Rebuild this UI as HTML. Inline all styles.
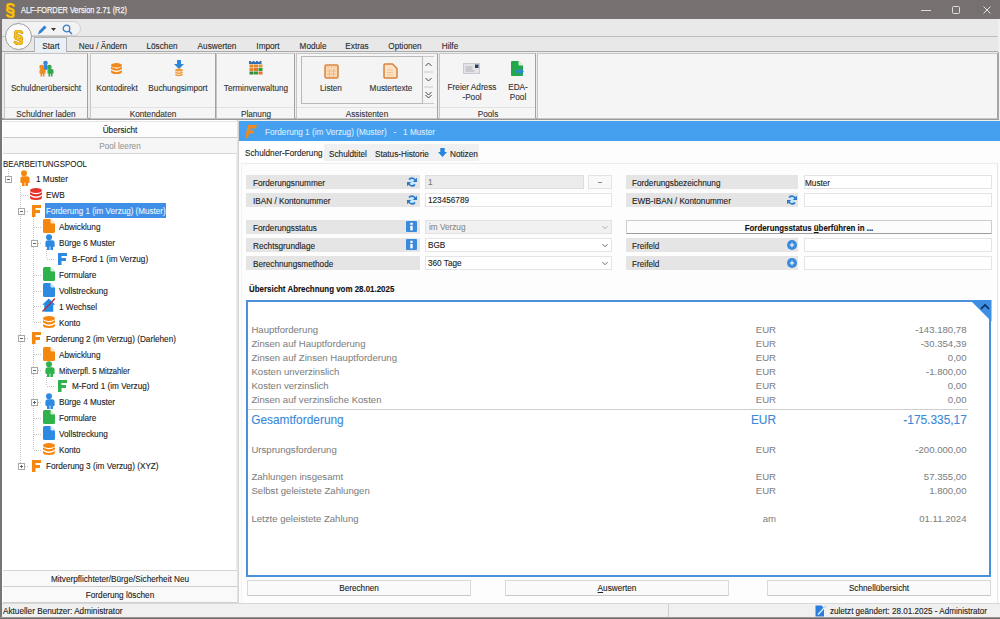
<!DOCTYPE html><html><head><meta charset="utf-8"><style>
*{margin:0;padding:0;box-sizing:border-box}
html,body{width:1000px;height:619px;overflow:hidden}
body{position:relative;background:#f0f0f0;font-family:"Liberation Sans",sans-serif;font-size:8.2px;color:#222}
.a{position:absolute}
.t{position:absolute;white-space:nowrap;line-height:1;-webkit-text-stroke:0.12px currentColor}
</style></head><body>
<svg width="0" height="0" style="position:absolute">
<defs>
<symbol id="person" viewBox="0 0 12 16"><circle cx="6" cy="3.2" r="3"/><path d="M3 6.3h6q2.6 0 2.6 2.6v3.4q0 .8-.8 .8h-.8v-3.5v6.6q0 .6-.6 .6h-1.4q-.6 0-.6-.6v-3.8h-.8v3.8q0 .6-.6 .6h-1.4q-.6 0-.6-.6v-6.6v3.5h-.8q-.8 0-.8-.8v-3.4q0-2.6 2.6-2.6z"/></symbol>
<symbol id="db" viewBox="0 0 12 12"><ellipse cx="6" cy="2.5" rx="6" ry="2.5"/><path d="M0 4.2q6 4 12 0v2.3q-6 4-12 0z"/><path d="M0 8q6 4 12 0v1.5q0 2.5-6 2.5t-6-2.5z"/></symbol>
<symbol id="F" viewBox="0 0 9 12"><path d="M0 0h9v3h-5.5v2h4.5v3h-4.5v4h-3.5z"/></symbol>
<symbol id="doc" viewBox="0 0 12 14"><path d="M1.5 0h6l4.5 4.5v8q0 1.5-1.5 1.5h-9q-1.5 0-1.5-1.5v-11q0-1.5 1.5-1.5z"/><path d="M7.5 0v3q0 1.5 1.5 1.5h3" fill="#fff" opacity=".8"/></symbol>
<symbol id="house" viewBox="0 0 13.5 14"><path d="M6.75 0.5l6.5 6.2h-2v7h-9v-7h-2z" fill="#1e8ae6"/><path d="M0.5 13.5L13 0.5" stroke="#b03040" stroke-width="1.4"/></symbol>
<symbol id="refresh" viewBox="0 0 10 10"><circle cx="5" cy="5" r="3.6" fill="#c6e6fb"/><path d="M8.6 4.2A3.7 3.7 0 0 0 2 2.6" fill="none" stroke="#2c78c8" stroke-width="1.7"/><path d="M10 0.8v4.2h-4.2z" fill="#2c78c8"/><path d="M1.4 5.8A3.7 3.7 0 0 0 8 7.4" fill="none" stroke="#2c78c8" stroke-width="1.7"/><path d="M0 9.2v-4.2h4.2z" fill="#2c78c8"/></symbol>
<symbol id="info" viewBox="0 0 11 11"><rect width="11" height="11" rx="1" fill="#3a8bdc"/><rect x="4.3" y="1.8" width="2.4" height="2" fill="#fff"/><rect x="4.3" y="4.8" width="2.4" height="4.6" fill="#fff"/></symbol>
<symbol id="plus" viewBox="0 0 10 10"><circle cx="5" cy="5" r="5" fill="#3a8bdc"/><path d="M5 2.8v4.4M2.8 5h4.4" stroke="#fff" stroke-width="1.1"/></symbol>
<symbol id="chev" viewBox="0 0 8 5"><path d="M1.5 1.2l2.5 2.5l2.5-2.5" fill="none" stroke="#666" stroke-width="1"/></symbol>
<symbol id="exp" viewBox="0 0 7 7"><rect x=".5" y=".5" width="6" height="6" fill="#fff" stroke="#a8a8a8"/><path d="M2 3.5h3" stroke="#666"/></symbol>
<symbol id="expp" viewBox="0 0 7 7"><rect x=".5" y=".5" width="6" height="6" fill="#fff" stroke="#a8a8a8"/><path d="M2 3.5h3M3.5 2v3" stroke="#666"/></symbol>
</defs></svg>
<div class="a" style="left:0px;top:0px;width:1000px;height:19px;background:#767070"></div>
<div class="t" style="left:21px;top:5.44px;font-size:9.4px;color:#f4f4f4;transform:scaleX(0.782);transform-origin:left;-webkit-text-stroke:0.25px #f4f4f4">ALF-FORDER Version 2.71 (R2)</div>
<svg class="a" style="left:5px;top:2.5px" width="11" height="15" viewBox="0 0 10.5 14.5"><path d="M8.5 2.6Q7.2 1 5.2 1Q2.2 1 2.2 3.1Q2.2 4.6 4.3 5.3L6.5 6Q8.4 6.7 8.4 8.2Q8.4 9.6 6.6 10M3.8 4.6Q2 5.2 2 6.6Q2 8 4 8.7L6.3 9.5Q8.3 10.2 8.3 11.5Q8.3 13.4 5.3 13.4Q3.2 13.4 2 11.8" fill="none" stroke="#c98a10" stroke-width="2.8" stroke-linecap="round"/><path d="M8.5 2.6Q7.2 1 5.2 1Q2.2 1 2.2 3.1Q2.2 4.6 4.3 5.3L6.5 6Q8.4 6.7 8.4 8.2Q8.4 9.6 6.6 10M3.8 4.6Q2 5.2 2 6.6Q2 8 4 8.7L6.3 9.5Q8.3 10.2 8.3 11.5Q8.3 13.4 5.3 13.4Q3.2 13.4 2 11.8" fill="none" stroke="#f6c21c" stroke-width="1.9" stroke-linecap="round"/></svg>
<div class="a" style="left:921px;top:10px;width:10px;height:1px;background:#dcdcdc"></div>
<div class="a" style="left:952px;top:6px;width:8px;height:8px;border:1px solid #dcdcdc;border-radius:1.5px"></div>
<svg class="a" style="left:982px;top:5px" width="10" height="10"><path d="M1.5 1.5L8.5 8.5M8.5 1.5L1.5 8.5" stroke="#e0e0e0" stroke-width="1"/></svg>
<div class="a" style="left:0px;top:19px;width:2px;height:600px;background:#7a7575"></div>
<div class="a" style="left:0px;top:617px;width:1000px;height:1px;background:#9a9696"></div>
<div class="a" style="left:0px;top:618px;width:1000px;height:1px;background:#6e6a6a"></div>
<div class="a" style="left:2px;top:19px;width:996px;height:18px;background:#e9e9e9;border-bottom:1px solid #bdbdbd"></div>
<div class="a" style="left:14px;top:21px;width:67px;height:15px;background:#f3f3f3;border:1px solid #cfcfcf;border-radius:8px"></div>
<svg class="a" style="left:37px;top:24px" width="11" height="11" viewBox="0 0 11 11"><path d="M1.5 9.5L2 7L7.5 1.5L9.5 3.5L4 9z" fill="#2f7fd0"/><path d="M1 10l1.5-0.5" stroke="#2f7fd0"/></svg>
<svg class="a" style="left:51px;top:28px" width="5" height="3"><path d="M0 0h5l-2.5 3z" fill="#333"/></svg>
<svg class="a" style="left:62px;top:24px" width="11" height="11" viewBox="0 0 11 11"><circle cx="4.5" cy="4.5" r="3.3" fill="none" stroke="#3b7fc6" stroke-width="1.3"/><path d="M7 7l3 3" stroke="#3b7fc6" stroke-width="1.5"/></svg>
<div class="a" style="left:2px;top:37px;width:996px;height:15px;background:#e8e8e8;border-bottom:1px solid #a9a9a9"></div>
<div class="a" style="left:34px;top:37px;width:33px;height:16px;background:#e8f0f8;border:1px solid #b3b3b3;border-bottom:none"></div>
<div class="t" style="left:-249px;width:600px;text-align:center;top:40.87px;font-size:9.6px;color:#2a2a2a;transform:scaleX(0.855);transform-origin:center;">Start</div>
<div class="t" style="left:-197px;width:600px;text-align:center;top:40.87px;font-size:9.6px;color:#2a2a2a;transform:scaleX(0.855);transform-origin:center;">Neu / Ändern</div>
<div class="t" style="left:-138px;width:600px;text-align:center;top:40.87px;font-size:9.6px;color:#2a2a2a;transform:scaleX(0.855);transform-origin:center;">Löschen</div>
<div class="t" style="left:-83px;width:600px;text-align:center;top:40.87px;font-size:9.6px;color:#2a2a2a;transform:scaleX(0.855);transform-origin:center;">Auswerten</div>
<div class="t" style="left:-31.69999999999999px;width:600px;text-align:center;top:40.87px;font-size:9.6px;color:#2a2a2a;transform:scaleX(0.855);transform-origin:center;">Import</div>
<div class="t" style="left:13px;width:600px;text-align:center;top:40.87px;font-size:9.6px;color:#2a2a2a;transform:scaleX(0.855);transform-origin:center;">Module</div>
<div class="t" style="left:57.39999999999998px;width:600px;text-align:center;top:40.87px;font-size:9.6px;color:#2a2a2a;transform:scaleX(0.855);transform-origin:center;">Extras</div>
<div class="t" style="left:105px;width:600px;text-align:center;top:40.87px;font-size:9.6px;color:#2a2a2a;transform:scaleX(0.855);transform-origin:center;">Optionen</div>
<div class="t" style="left:149.7px;width:600px;text-align:center;top:40.87px;font-size:9.6px;color:#2a2a2a;transform:scaleX(0.855);transform-origin:center;">Hilfe</div>
<div class="a" style="left:5px;top:23px;width:27px;height:27px;background:#fbfbfb;border:1px solid #9c9c9c;border-radius:50%"></div>
<svg class="a" style="left:12.5px;top:29.5px" width="11" height="15" viewBox="0 0 10.5 14.5"><path d="M8.5 2.6Q7.2 1 5.2 1Q2.2 1 2.2 3.1Q2.2 4.6 4.3 5.3L6.5 6Q8.4 6.7 8.4 8.2Q8.4 9.6 6.6 10M3.8 4.6Q2 5.2 2 6.6Q2 8 4 8.7L6.3 9.5Q8.3 10.2 8.3 11.5Q8.3 13.4 5.3 13.4Q3.2 13.4 2 11.8" fill="none" stroke="#c98a10" stroke-width="2.8" stroke-linecap="round"/><path d="M8.5 2.6Q7.2 1 5.2 1Q2.2 1 2.2 3.1Q2.2 4.6 4.3 5.3L6.5 6Q8.4 6.7 8.4 8.2Q8.4 9.6 6.6 10M3.8 4.6Q2 5.2 2 6.6Q2 8 4 8.7L6.3 9.5Q8.3 10.2 8.3 11.5Q8.3 13.4 5.3 13.4Q3.2 13.4 2 11.8" fill="none" stroke="#f6c21c" stroke-width="1.9" stroke-linecap="round"/></svg>
<div class="a" style="left:2px;top:52px;width:997px;height:68px;background:#ececec;border-right:1px solid #a9a9a9;border-bottom:2px solid #9a9a9a"></div>
<div class="a" style="left:4px;top:53px;width:84px;height:66px;background:#f5f5f5;border:1px solid #c6c6c6;border-right-color:#a2a2a2"></div>
<div class="a" style="left:5px;top:107px;width:82px;height:1px;background:#e2e2e2"></div>
<div class="t" style="left:-254.0px;width:600px;text-align:center;top:108.67px;font-size:9.6px;color:#333;transform:scaleX(0.855);transform-origin:center;">Schuldner laden</div>
<div class="a" style="left:90px;top:53px;width:126px;height:66px;background:#f5f5f5;border:1px solid #c6c6c6;border-right-color:#a2a2a2"></div>
<div class="a" style="left:91px;top:107px;width:124px;height:1px;background:#e2e2e2"></div>
<div class="t" style="left:-147.0px;width:600px;text-align:center;top:108.67px;font-size:9.6px;color:#333;transform:scaleX(0.855);transform-origin:center;">Kontendaten</div>
<div class="a" style="left:216px;top:53px;width:79px;height:66px;background:#f5f5f5;border:1px solid #c6c6c6;border-right-color:#a2a2a2"></div>
<div class="a" style="left:217px;top:107px;width:77px;height:1px;background:#e2e2e2"></div>
<div class="t" style="left:-44.5px;width:600px;text-align:center;top:108.67px;font-size:9.6px;color:#333;transform:scaleX(0.855);transform-origin:center;">Planung</div>
<div class="a" style="left:296px;top:53px;width:142px;height:66px;background:#f5f5f5;border:1px solid #c6c6c6;border-right-color:#a2a2a2"></div>
<div class="a" style="left:297px;top:107px;width:140px;height:1px;background:#e2e2e2"></div>
<div class="t" style="left:67.0px;width:600px;text-align:center;top:108.67px;font-size:9.6px;color:#333;transform:scaleX(0.855);transform-origin:center;">Assistenten</div>
<div class="a" style="left:439px;top:53px;width:97px;height:66px;background:#f5f5f5;border:1px solid #c6c6c6;border-right-color:#a2a2a2"></div>
<div class="a" style="left:440px;top:107px;width:95px;height:1px;background:#e2e2e2"></div>
<div class="t" style="left:187.5px;width:600px;text-align:center;top:108.67px;font-size:9.6px;color:#333;transform:scaleX(0.855);transform-origin:center;">Pools</div>
<div class="a" style="left:537px;top:53px;width:461px;height:66px;background:#f5f5f5;border:1px solid #c6c6c6;border-right-color:#a2a2a2"></div>
<div class="t" style="left:-253.7px;width:600px;text-align:center;top:82.87px;font-size:9.6px;color:#333;transform:scaleX(0.855);transform-origin:center;">Schuldnerübersicht</div>
<div class="t" style="left:-183.2px;width:600px;text-align:center;top:82.87px;font-size:9.6px;color:#333;transform:scaleX(0.855);transform-origin:center;">Kontodirekt</div>
<div class="t" style="left:-121.80000000000001px;width:600px;text-align:center;top:82.87px;font-size:9.6px;color:#333;transform:scaleX(0.855);transform-origin:center;">Buchungsimport</div>
<div class="t" style="left:-44px;width:600px;text-align:center;top:82.87px;font-size:9.6px;color:#333;transform:scaleX(0.855);transform-origin:center;">Terminverwaltung</div>
<div class="a" style="left:301px;top:56px;width:122px;height:48px;background:#f4f4f4;border:1px solid #b9b9b9"></div>
<div class="a" style="left:423px;top:56px;width:11px;height:48px;background:#f4f4f4;border-top:1px solid #c9c9c9;border-bottom:1px solid #c9c9c9"></div>
<div class="t" style="left:31px;width:600px;text-align:center;top:83.37px;font-size:9.6px;color:#333;transform:scaleX(0.855);transform-origin:center;">Listen</div>
<div class="t" style="left:90.5px;width:600px;text-align:center;top:83.37px;font-size:9.6px;color:#333;transform:scaleX(0.855);transform-origin:center;">Mustertexte</div>
<div class="t" style="left:172px;width:600px;text-align:center;top:82.37px;font-size:9.6px;color:#333;transform:scaleX(0.855);transform-origin:center;">Freier Adress</div>
<div class="t" style="left:172px;width:600px;text-align:center;top:92.37px;font-size:9.6px;color:#333;transform:scaleX(0.855);transform-origin:center;">-Pool</div>
<div class="t" style="left:218px;width:600px;text-align:center;top:82.37px;font-size:9.6px;color:#333;transform:scaleX(0.855);transform-origin:center;">EDA-</div>
<div class="t" style="left:218px;width:600px;text-align:center;top:92.37px;font-size:9.6px;color:#333;transform:scaleX(0.855);transform-origin:center;">Pool</div>
<svg class="a" style="left:423px;top:58px" width="11" height="45" viewBox="0 0 11 45"><path d="M2.5 8l3-3l3 3" fill="none" stroke="#444" stroke-width="1"/><path d="M1 14h9M1 29h9" stroke="#c8c8c8"/><path d="M2.5 20l3 3l3-3" fill="none" stroke="#444" stroke-width="1"/><path d="M2.5 34l3 3l3-3M2.5 37l3 3l3-3" fill="none" stroke="#444" stroke-width="1"/></svg>
<svg class="a" style="left:37px;top:60px" width="17" height="17" viewBox="0 0 17 17"><g fill="#3a86d8"><circle cx="8.5" cy="3" r="2.3"/><rect x="6.3" y="5" width="4.4" height="5" rx="1"/></g><g fill="#f28a1e"><circle cx="4.5" cy="7" r="2.2"/><path d="M2 9h5q1.5 0 1.5 1.5v3h-1v3h-1.6v-2.5h-0.8v2.5h-1.6v-3h-1v-3q0-1.5 1.5-1.5z"/></g><g fill="#2ea84a"><circle cx="12.5" cy="7" r="2.2"/><path d="M10 9h5q1.5 0 1.5 1.5v3h-1v3h-1.6v-2.5h-0.8v2.5h-1.6v-3h-1v-3q0-1.5 1.5-1.5z"/></g></svg>
<svg class="a" style="left:110.5px;top:63px;fill:#f08a1e" width="11" height="11"><use href="#db"/></svg>
<svg class="a" style="left:174px;top:60px" width="10" height="17" viewBox="0 0 10 17"><path d="M3 0h4v4h3l-5 5l-5-5h3z" fill="#2b86dc"/><g fill="#f29a3c"><ellipse cx="5" cy="10" rx="3.8" ry="1.5"/><path d="M1.2 11.2q3.8 2.5 7.6 0v1.5q-3.8 2.5-7.6 0z"/><path d="M1.2 13.6q3.8 2.5 7.6 0v1q0 1.6-3.8 1.6t-3.8-1.6z"/></g></svg>
<svg class="a" style="left:249px;top:61px" width="14" height="14" viewBox="0 0 14 14"><path d="M0 0h2v1h1.5v-1h2v1h1.5v-1h2v1h1.5v-1h2v3h-14z" fill="#2f6fb8"/><rect x="0.5" y="3.5" width="4" height="3" fill="#e8862a"/><rect x="5" y="3.5" width="4" height="3" fill="#e8862a"/><rect x="9.5" y="3.5" width="4" height="3" fill="#d99a3a"/><rect x="0.5" y="7" width="4" height="3" fill="#e8862a"/><rect x="5" y="7" width="4" height="3" fill="#e0782a"/><rect x="9.5" y="7" width="4" height="3" fill="#2f9a3e"/><rect x="0.5" y="10.5" width="4" height="3" fill="#2f8a3a"/><rect x="5" y="10.5" width="4" height="3" fill="#3a9a3a"/><rect x="9.5" y="10.5" width="4" height="3" fill="#e0782a"/></svg>
<svg class="a" style="left:324px;top:64px" width="15" height="15" viewBox="0 0 15 15"><rect x="1" y="1" width="13" height="13" rx="1.5" fill="#fbd9b4" stroke="#d9833a" stroke-width="1.5"/><path d="M4 1v3M7.5 1v3M11 1v3M3 7h9M3 10h9M5.5 5v8M9.5 5v8" stroke="#eab586" stroke-width=".8"/></svg>
<svg class="a" style="left:383px;top:63px" width="15" height="16" viewBox="0 0 15 16"><path d="M2 1h7.5l4.5 4.5v8.5q0 1-1 1h-11q-1 0-1-1v-12q0-1 1-1z" fill="#fde3c5" stroke="#d9833a" stroke-width="1.5"/><path d="M4 7h6M4 9.5h6M4 12h6" stroke="#eab586" stroke-width=".7"/></svg>
<svg class="a" style="left:463px;top:63px" width="17" height="11" viewBox="0 0 17 11"><rect x=".5" y=".5" width="16" height="10" fill="#e4e4e8" stroke="#c9c9cf"/><path d="M2.5 4h7M2.5 6h7M2.5 8h9" stroke="#a9a9b2" stroke-width=".9"/><rect x="12" y="1.5" width="3.5" height="3.5" fill="#2a3f5a"/></svg>
<svg class="a" style="left:511px;top:61px" width="14" height="15" viewBox="0 0 14 15"><path d="M1 0h6.5l4.5 4.5v9.5q0 1-1 1h-10q-1 0-1-1v-13q0-1 1-1z" fill="#22a84a"/><path d="M7.5 0v3.5q0 1 1 1h3.5" fill="#d8f5de"/><path d="M5 9.5h4v-2l4 3l-4 3v-2h-4z" fill="#2e86e0"/></svg>
<div class="a" style="left:2px;top:120px;width:236px;height:483px;background:#fff"></div>
<div class="a" style="left:236px;top:120px;width:1px;height:483px;background:#eeeeee"></div>
<div class="a" style="left:237px;top:120px;width:1px;height:483px;background:#e2e2e2"></div>
<div class="a" style="left:238px;top:120px;width:1px;height:483px;background:#d4d4d4"></div>
<div class="a" style="left:3px;top:121px;width:234px;height:17px;background:#fdfdfd;border-top:1px solid #e6e6e6;border-bottom:1px solid #c9c9c9"></div>
<div class="t" style="left:-180px;width:600px;text-align:center;top:124.97px;font-size:9.6px;color:#222;transform:scaleX(0.855);transform-origin:center;">Übersicht</div>
<div class="a" style="left:3px;top:138px;width:234px;height:16px;background:#f6f6f6;border-bottom:1px solid #d6d6d6"></div>
<div class="t" style="left:-180px;width:600px;text-align:center;top:140.87px;font-size:9.6px;color:#9a9a9a;transform:scaleX(0.855);transform-origin:center;">Pool leeren</div>
<div class="t" style="left:2.5px;top:158.87px;font-size:9.6px;color:#222;transform:scaleX(0.825);transform-origin:left;-webkit-text-stroke:0.1px #222">BEARBEITUNGSPOOL</div>
<div class="a" style="left:239px;top:121px;width:761px;height:20px;background:#45a0f0"></div>
<svg class="a" style="left:246px;top:125px" width="11" height="13" viewBox="0 0 11 13"><path d="M2 0h9l-1 3.5h-5.5l-0.5 2h4.5l-1 3h-4.5l-1 4.5h-3z" fill="#f08a1e"/></svg>
<div class="t" style="left:264.5px;top:126.97px;font-size:9.6px;color:#dcebfb;transform:scaleX(0.855);transform-origin:left;">Forderung 1 (im Verzug) (Muster)&nbsp;&nbsp;&nbsp;-&nbsp;&nbsp;&nbsp;1 Muster</div>
<div class="a" style="left:20px;top:186.0px;width:1px;height:279.74px;background:repeating-linear-gradient(to bottom,#c4c4c4 0 1px,transparent 1px 2px)"></div>
<div class="a" style="left:8px;top:169.0px;width:1px;height:7.0px;background:repeating-linear-gradient(to bottom,#c4c4c4 0 1px,transparent 1px 2px)"></div>
<div class="a" style="left:33px;top:216.86px;width:1px;height:105.50999999999999px;background:repeating-linear-gradient(to bottom,#c4c4c4 0 1px,transparent 1px 2px)"></div>
<div class="a" style="left:33px;top:344.3px;width:1px;height:105.50999999999999px;background:repeating-linear-gradient(to bottom,#c4c4c4 0 1px,transparent 1px 2px)"></div>
<div class="a" style="left:46px;top:248.72px;width:1px;height:9.929999999999978px;background:repeating-linear-gradient(to bottom,#c4c4c4 0 1px,transparent 1px 2px)"></div>
<div class="a" style="left:46px;top:376.15999999999997px;width:1px;height:9.930000000000064px;background:repeating-linear-gradient(to bottom,#c4c4c4 0 1px,transparent 1px 2px)"></div>
<svg class="a" style="left:5px;top:176.0px;" width="7" height="7"><use href="#exp"/></svg>
<svg class="a" style="left:17.5px;top:170.0px;fill:#f5870f" width="12" height="16"><use href="#person"/></svg>
<div class="t" style="left:36px;top:174.37px;font-size:9.6px;color:#222;transform:scaleX(0.855);transform-origin:left;">1 Muster</div>
<div class="a" style="left:21px;top:194.93px;width:8px;height:1px;background:repeating-linear-gradient(to right,#c4c4c4 0 1px,transparent 1px 2px)"></div>
<svg class="a" style="left:30px;top:188.43px;fill:#e5322b" width="12" height="12"><use href="#db"/></svg>
<div class="t" style="left:46px;top:190.30px;font-size:9.6px;color:#222;transform:scaleX(0.855);transform-origin:left;">EWB</div>
<div class="a" style="left:21px;top:210.86px;width:8px;height:1px;background:repeating-linear-gradient(to right,#c4c4c4 0 1px,transparent 1px 2px)"></div>
<svg class="a" style="left:18px;top:207.86px;" width="7" height="7"><use href="#exp"/></svg>
<svg class="a" style="left:31.5px;top:204.86px;fill:#f5870f" width="9" height="12"><use href="#F"/></svg>
<div class="a" style="left:45px;top:202.86px;width:121px;height:15px;background:#3f8fe8"></div>
<div class="t" style="left:46px;top:206.23px;font-size:9.6px;color:#e4f4ff;transform:scaleX(0.84);transform-origin:left;">Forderung 1 (im Verzug) (Muster)</div>
<div class="a" style="left:34px;top:226.79px;width:8px;height:1px;background:repeating-linear-gradient(to right,#c4c4c4 0 1px,transparent 1px 2px)"></div>
<svg class="a" style="left:42.5px;top:219.29px;fill:#f5870f" width="12" height="14"><use href="#doc"/></svg>
<div class="t" style="left:59px;top:222.16px;font-size:9.6px;color:#222;transform:scaleX(0.855);transform-origin:left;">Abwicklung</div>
<div class="a" style="left:34px;top:242.72px;width:8px;height:1px;background:repeating-linear-gradient(to right,#c4c4c4 0 1px,transparent 1px 2px)"></div>
<svg class="a" style="left:31px;top:239.72px;" width="7" height="7"><use href="#exp"/></svg>
<svg class="a" style="left:43px;top:233.72px;fill:#2d8ae2" width="12" height="16"><use href="#person"/></svg>
<div class="t" style="left:59px;top:238.09px;font-size:9.6px;color:#222;transform:scaleX(0.855);transform-origin:left;">Bürge 6 Muster</div>
<div class="a" style="left:47px;top:258.65px;width:8px;height:1px;background:repeating-linear-gradient(to right,#c4c4c4 0 1px,transparent 1px 2px)"></div>
<svg class="a" style="left:57.5px;top:252.64999999999998px;fill:#2d8ae2" width="9" height="12"><use href="#F"/></svg>
<div class="t" style="left:72px;top:254.02px;font-size:9.6px;color:#222;transform:scaleX(0.855);transform-origin:left;">B-Ford 1 (im Verzug)</div>
<div class="a" style="left:34px;top:274.58px;width:8px;height:1px;background:repeating-linear-gradient(to right,#c4c4c4 0 1px,transparent 1px 2px)"></div>
<svg class="a" style="left:42.5px;top:267.08px;fill:#2fb24c" width="12" height="14"><use href="#doc"/></svg>
<div class="t" style="left:59px;top:269.95px;font-size:9.6px;color:#222;transform:scaleX(0.855);transform-origin:left;">Formulare</div>
<div class="a" style="left:34px;top:290.51px;width:8px;height:1px;background:repeating-linear-gradient(to right,#c4c4c4 0 1px,transparent 1px 2px)"></div>
<svg class="a" style="left:42.5px;top:283.01px;fill:#2d8ae2" width="12" height="14"><use href="#doc"/></svg>
<div class="t" style="left:59px;top:285.88px;font-size:9.6px;color:#222;transform:scaleX(0.855);transform-origin:left;">Vollstreckung</div>
<div class="a" style="left:34px;top:306.44px;width:8px;height:1px;background:repeating-linear-gradient(to right,#c4c4c4 0 1px,transparent 1px 2px)"></div>
<svg class="a" style="left:41.5px;top:298.44px;" width="13.5" height="14"><use href="#house"/></svg>
<div class="t" style="left:59px;top:301.81px;font-size:9.6px;color:#222;transform:scaleX(0.855);transform-origin:left;">1 Wechsel</div>
<div class="a" style="left:34px;top:322.37px;width:8px;height:1px;background:repeating-linear-gradient(to right,#c4c4c4 0 1px,transparent 1px 2px)"></div>
<svg class="a" style="left:43px;top:315.87px;fill:#f5870f" width="12" height="12"><use href="#db"/></svg>
<div class="t" style="left:59px;top:317.74px;font-size:9.6px;color:#222;transform:scaleX(0.855);transform-origin:left;">Konto</div>
<div class="a" style="left:21px;top:338.3px;width:8px;height:1px;background:repeating-linear-gradient(to right,#c4c4c4 0 1px,transparent 1px 2px)"></div>
<svg class="a" style="left:18px;top:335.3px;" width="7" height="7"><use href="#exp"/></svg>
<svg class="a" style="left:31.5px;top:332.3px;fill:#f5870f" width="9" height="12"><use href="#F"/></svg>
<div class="t" style="left:46px;top:333.67px;font-size:9.6px;color:#222;transform:scaleX(0.855);transform-origin:left;">Forderung 2 (im Verzug) (Darlehen)</div>
<div class="a" style="left:34px;top:354.23px;width:8px;height:1px;background:repeating-linear-gradient(to right,#c4c4c4 0 1px,transparent 1px 2px)"></div>
<svg class="a" style="left:42.5px;top:346.73px;fill:#f5870f" width="12" height="14"><use href="#doc"/></svg>
<div class="t" style="left:59px;top:349.60px;font-size:9.6px;color:#222;transform:scaleX(0.855);transform-origin:left;">Abwicklung</div>
<div class="a" style="left:34px;top:370.15999999999997px;width:8px;height:1px;background:repeating-linear-gradient(to right,#c4c4c4 0 1px,transparent 1px 2px)"></div>
<svg class="a" style="left:31px;top:367.15999999999997px;" width="7" height="7"><use href="#exp"/></svg>
<svg class="a" style="left:43px;top:361.15999999999997px;fill:#2fb24c" width="12" height="16"><use href="#person"/></svg>
<div class="t" style="left:59px;top:365.53px;font-size:9.6px;color:#222;transform:scaleX(0.8);transform-origin:left;">Mitverpfl. 5 Mitzahler</div>
<div class="a" style="left:47px;top:386.09000000000003px;width:8px;height:1px;background:repeating-linear-gradient(to right,#c4c4c4 0 1px,transparent 1px 2px)"></div>
<svg class="a" style="left:57.5px;top:380.09000000000003px;fill:#2fb24c" width="9" height="12"><use href="#F"/></svg>
<div class="t" style="left:72px;top:381.46px;font-size:9.6px;color:#222;transform:scaleX(0.855);transform-origin:left;">M-Ford 1 (im Verzug)</div>
<div class="a" style="left:34px;top:402.02px;width:8px;height:1px;background:repeating-linear-gradient(to right,#c4c4c4 0 1px,transparent 1px 2px)"></div>
<svg class="a" style="left:31px;top:399.02px;" width="7" height="7"><use href="#expp"/></svg>
<svg class="a" style="left:43px;top:393.02px;fill:#2d8ae2" width="12" height="16"><use href="#person"/></svg>
<div class="t" style="left:59px;top:397.39px;font-size:9.6px;color:#222;transform:scaleX(0.855);transform-origin:left;">Bürge 4 Muster</div>
<div class="a" style="left:34px;top:417.95px;width:8px;height:1px;background:repeating-linear-gradient(to right,#c4c4c4 0 1px,transparent 1px 2px)"></div>
<svg class="a" style="left:42.5px;top:410.45px;fill:#2fb24c" width="12" height="14"><use href="#doc"/></svg>
<div class="t" style="left:59px;top:413.32px;font-size:9.6px;color:#222;transform:scaleX(0.855);transform-origin:left;">Formulare</div>
<div class="a" style="left:34px;top:433.88px;width:8px;height:1px;background:repeating-linear-gradient(to right,#c4c4c4 0 1px,transparent 1px 2px)"></div>
<svg class="a" style="left:42.5px;top:426.38px;fill:#2d8ae2" width="12" height="14"><use href="#doc"/></svg>
<div class="t" style="left:59px;top:429.25px;font-size:9.6px;color:#222;transform:scaleX(0.855);transform-origin:left;">Vollstreckung</div>
<div class="a" style="left:34px;top:449.81px;width:8px;height:1px;background:repeating-linear-gradient(to right,#c4c4c4 0 1px,transparent 1px 2px)"></div>
<svg class="a" style="left:43px;top:443.31px;fill:#f5870f" width="12" height="12"><use href="#db"/></svg>
<div class="t" style="left:59px;top:445.18px;font-size:9.6px;color:#222;transform:scaleX(0.855);transform-origin:left;">Konto</div>
<div class="a" style="left:21px;top:465.74px;width:8px;height:1px;background:repeating-linear-gradient(to right,#c4c4c4 0 1px,transparent 1px 2px)"></div>
<svg class="a" style="left:18px;top:462.74px;" width="7" height="7"><use href="#expp"/></svg>
<svg class="a" style="left:31.5px;top:459.74px;fill:#f5870f" width="9" height="12"><use href="#F"/></svg>
<div class="t" style="left:46px;top:461.11px;font-size:9.6px;color:#222;transform:scaleX(0.855);transform-origin:left;">Forderung 3 (im Verzug) (XYZ)</div>
<div class="a" style="left:3px;top:570px;width:234px;height:1px;background:#d6d6d6"></div>
<div class="a" style="left:3px;top:571px;width:234px;height:16px;background:#f9f9f9;border-bottom:1px solid #cfcfcf"></div>
<div class="t" style="left:-180px;width:600px;text-align:center;top:573.87px;font-size:9.6px;color:#222;transform:scaleX(0.855);transform-origin:center;">Mitverpflichteter/Bürge/Sicherheit Neu</div>
<div class="a" style="left:3px;top:587px;width:234px;height:16px;background:#f9f9f9;border-bottom:1px solid #cfcfcf"></div>
<div class="t" style="left:-180px;width:600px;text-align:center;top:589.87px;font-size:9.6px;color:#222;transform:scaleX(0.855);transform-origin:center;">Forderung löschen</div>
<div class="a" style="left:239px;top:141px;width:761px;height:462px;background:#fdfdfd"></div>
<div class="a" style="left:240px;top:143px;width:85px;height:19px;background:#fff"></div>
<div class="t" style="left:245px;top:147.87px;font-size:9.6px;color:#222;transform:scaleX(0.855);transform-origin:left;">Schuldner-Forderung</div>
<div class="a" style="left:324px;top:144px;width:155px;height:17px;background:#f0f0f0"></div>
<div class="t" style="left:329px;top:148.87px;font-size:9.6px;color:#222;transform:scaleX(0.855);transform-origin:left;">Schuldtitel</div>
<div class="t" style="left:374.8px;top:148.87px;font-size:9.6px;color:#222;transform:scaleX(0.855);transform-origin:left;">Status-Historie</div>
<svg class="a" style="left:437.5px;top:148px" width="9" height="9" viewBox="0 0 9 9"><path d="M2.3 0h4.4v4h2.3l-4.5 5l-4.5-5h2.3z" fill="#2486dc"/></svg>
<div class="t" style="left:449.5px;top:148.87px;font-size:9.6px;color:#222;transform:scaleX(0.855);transform-origin:left;">Notizen</div>
<div class="a" style="left:241px;top:163px;width:757px;height:441px;background:#fdfdfd;border:1px solid #f3f3f3;border-top-color:#ededed;border-right-color:#e6e6e6"></div>
<div class="a" style="left:246px;top:175px;width:174px;height:14px;background:#e5e5e5"></div>
<div class="t" style="left:252.5px;top:177.97px;font-size:9.6px;color:#222;transform:scaleX(0.855);transform-origin:left;">Forderungsnummer</div>
<div class="a" style="left:246px;top:193px;width:174px;height:14px;background:#e5e5e5"></div>
<div class="t" style="left:252.5px;top:195.97px;font-size:9.6px;color:#222;transform:scaleX(0.855);transform-origin:left;">IBAN / Kontonummer</div>
<div class="a" style="left:246px;top:220px;width:174px;height:14px;background:#e5e5e5"></div>
<div class="t" style="left:252.5px;top:222.97px;font-size:9.6px;color:#222;transform:scaleX(0.855);transform-origin:left;">Forderungsstatus</div>
<div class="a" style="left:246px;top:238px;width:174px;height:14px;background:#e5e5e5"></div>
<div class="t" style="left:252.5px;top:240.97px;font-size:9.6px;color:#222;transform:scaleX(0.855);transform-origin:left;">Rechtsgrundlage</div>
<div class="a" style="left:246px;top:256px;width:174px;height:14px;background:#e5e5e5"></div>
<div class="t" style="left:252.5px;top:258.97px;font-size:9.6px;color:#222;transform:scaleX(0.855);transform-origin:left;">Berechnungsmethode</div>
<svg class="a" style="left:407px;top:176.5px;" width="10" height="10"><use href="#refresh"/></svg>
<svg class="a" style="left:407px;top:194.5px;" width="10" height="10"><use href="#refresh"/></svg>
<svg class="a" style="left:406px;top:221px;" width="11" height="11"><use href="#info"/></svg>
<svg class="a" style="left:406px;top:239px;" width="11" height="11"><use href="#info"/></svg>
<div class="a" style="left:425px;top:175px;width:159px;height:14px;background:#ececec;border:1px solid #dedede"></div>
<div class="t" style="left:428px;top:177.47px;font-size:9.6px;color:#777;transform:scaleX(0.855);transform-origin:left;">1</div>
<div class="a" style="left:588px;top:175px;width:24px;height:14px;background:#f8f8f8;border:1px solid #e4e4e4"></div>
<div class="a" style="left:598px;top:182px;width:4px;height:1px;background:#888"></div>
<div class="a" style="left:425px;top:193px;width:187px;height:14px;background:#fff;border:1px solid #e4e4e4"></div>
<div class="t" style="left:428px;top:195.47px;font-size:9.6px;color:#222;transform:scaleX(0.855);transform-origin:left;">123456789</div>
<div class="a" style="left:425px;top:220px;width:187px;height:14px;background:#f1f1f1;border:1px solid #e1e1e1"></div>
<div class="t" style="left:428.5px;top:222.47px;font-size:9.6px;color:#8a8a8a;transform:scaleX(0.855);transform-origin:left;">im Verzug</div>
<svg class="a" style="left:601px;top:225px;opacity:.5" width="8" height="5"><use href="#chev"/></svg>
<div class="a" style="left:425px;top:238px;width:187px;height:14px;background:#fff;border:1px solid #e4e4e4"></div>
<div class="t" style="left:428px;top:240.47px;font-size:9.6px;color:#222;transform:scaleX(0.855);transform-origin:left;">BGB</div>
<svg class="a" style="left:601px;top:243px;" width="8" height="5"><use href="#chev"/></svg>
<div class="a" style="left:425px;top:256px;width:187px;height:14px;background:#fff;border:1px solid #e4e4e4"></div>
<div class="t" style="left:428px;top:258.47px;font-size:9.6px;color:#222;transform:scaleX(0.855);transform-origin:left;">360 Tage</div>
<svg class="a" style="left:601px;top:261px;" width="8" height="5"><use href="#chev"/></svg>
<div class="a" style="left:626px;top:175px;width:172px;height:14px;background:#e5e5e5"></div>
<div class="t" style="left:632px;top:177.97px;font-size:9.6px;color:#222;transform:scaleX(0.855);transform-origin:left;">Forderungsbezeichnung</div>
<div class="a" style="left:804px;top:175px;width:188px;height:14px;background:#fff;border:1px solid #e4e4e4"></div>
<div class="a" style="left:626px;top:193px;width:172px;height:14px;background:#e5e5e5"></div>
<div class="t" style="left:632px;top:195.97px;font-size:9.6px;color:#222;transform:scaleX(0.855);transform-origin:left;">EWB-IBAN / Kontonummer</div>
<div class="a" style="left:804px;top:193px;width:188px;height:14px;background:#fff;border:1px solid #e4e4e4"></div>
<svg class="a" style="left:787px;top:194.5px;" width="10" height="10"><use href="#refresh"/></svg>
<div class="a" style="left:626px;top:238px;width:172px;height:14px;background:#e5e5e5"></div>
<div class="t" style="left:632px;top:240.97px;font-size:9.6px;color:#222;transform:scaleX(0.855);transform-origin:left;">Freifeld</div>
<div class="a" style="left:804px;top:238px;width:188px;height:14px;background:#fff;border:1px solid #e4e4e4"></div>
<svg class="a" style="left:786.5px;top:240px;" width="10" height="10"><use href="#plus"/></svg>
<div class="a" style="left:626px;top:256px;width:172px;height:14px;background:#e5e5e5"></div>
<div class="t" style="left:632px;top:258.97px;font-size:9.6px;color:#222;transform:scaleX(0.855);transform-origin:left;">Freifeld</div>
<div class="a" style="left:804px;top:256px;width:188px;height:14px;background:#fff;border:1px solid #e4e4e4"></div>
<svg class="a" style="left:786.5px;top:258px;" width="10" height="10"><use href="#plus"/></svg>
<div class="t" style="left:804.5px;top:177.97px;font-size:9.6px;color:#222;transform:scaleX(0.855);transform-origin:left;">Muster</div>
<div class="a" style="left:626px;top:220px;width:366px;height:14px;background:#fcfcfc;border:1px solid #cdcdcd;border-bottom-color:#9d9d9d;border-radius:1px"></div>
<div class="t" style="left:508.5px;width:600px;text-align:center;top:222.97px;font-size:9.6px;color:#111;font-weight:bold;transform:scaleX(0.82);transform-origin:center;">Forderungsstatus <u>ü</u>berführen in ...</div>
<div class="t" style="left:249px;top:283.67px;font-size:9.6px;color:#111;font-weight:bold;transform:scaleX(0.825);transform-origin:left;">Übersicht Abrechnung vom 28.01.2025</div>
<div class="a" style="left:246px;top:300px;width:745px;height:276.5px;background:#fff;border:2.5px solid #4a90dc"></div>
<svg class="a" style="left:969.5px;top:300px" width="22" height="22" viewBox="0 0 22 22"><path d="M0 0h21.5v21.5z" fill="#3d8fe3"/><path d="M11 9l4-4l4 4" fill="none" stroke="#0a2a5a" stroke-width="1.6"/></svg>
<div class="t" style="left:251.4px;top:324.87px;font-size:9.6px;color:#7f7f7f;-webkit-text-stroke:0.05px #7f7f7f">Hauptforderung</div>
<div class="t" style="left:376px;width:400px;text-align:right;top:324.87px;font-size:9.6px;color:#7f7f7f;-webkit-text-stroke:0.05px #7f7f7f">EUR</div>
<div class="t" style="left:566.5px;width:400px;text-align:right;top:324.87px;font-size:9.6px;color:#7f7f7f;-webkit-text-stroke:0.05px #7f7f7f">-143.180,78</div>
<div class="t" style="left:251.4px;top:338.87px;font-size:9.6px;color:#7f7f7f;-webkit-text-stroke:0.05px #7f7f7f">Zinsen auf Hauptforderung</div>
<div class="t" style="left:376px;width:400px;text-align:right;top:338.87px;font-size:9.6px;color:#7f7f7f;-webkit-text-stroke:0.05px #7f7f7f">EUR</div>
<div class="t" style="left:566.5px;width:400px;text-align:right;top:338.87px;font-size:9.6px;color:#7f7f7f;-webkit-text-stroke:0.05px #7f7f7f">-30.354,39</div>
<div class="t" style="left:251.4px;top:352.87px;font-size:9.6px;color:#7f7f7f;-webkit-text-stroke:0.05px #7f7f7f">Zinsen auf Zinsen Hauptforderung</div>
<div class="t" style="left:376px;width:400px;text-align:right;top:352.87px;font-size:9.6px;color:#7f7f7f;-webkit-text-stroke:0.05px #7f7f7f">EUR</div>
<div class="t" style="left:566.5px;width:400px;text-align:right;top:352.87px;font-size:9.6px;color:#7f7f7f;-webkit-text-stroke:0.05px #7f7f7f">0,00</div>
<div class="t" style="left:251.4px;top:366.87px;font-size:9.6px;color:#7f7f7f;-webkit-text-stroke:0.05px #7f7f7f">Kosten unverzinslich</div>
<div class="t" style="left:376px;width:400px;text-align:right;top:366.87px;font-size:9.6px;color:#7f7f7f;-webkit-text-stroke:0.05px #7f7f7f">EUR</div>
<div class="t" style="left:566.5px;width:400px;text-align:right;top:366.87px;font-size:9.6px;color:#7f7f7f;-webkit-text-stroke:0.05px #7f7f7f">-1.800,00</div>
<div class="t" style="left:251.4px;top:380.87px;font-size:9.6px;color:#7f7f7f;-webkit-text-stroke:0.05px #7f7f7f">Kosten verzinslich</div>
<div class="t" style="left:376px;width:400px;text-align:right;top:380.87px;font-size:9.6px;color:#7f7f7f;-webkit-text-stroke:0.05px #7f7f7f">EUR</div>
<div class="t" style="left:566.5px;width:400px;text-align:right;top:380.87px;font-size:9.6px;color:#7f7f7f;-webkit-text-stroke:0.05px #7f7f7f">0,00</div>
<div class="t" style="left:251.4px;top:394.87px;font-size:9.6px;color:#7f7f7f;-webkit-text-stroke:0.05px #7f7f7f">Zinsen auf verzinsliche Kosten</div>
<div class="t" style="left:376px;width:400px;text-align:right;top:394.87px;font-size:9.6px;color:#7f7f7f;-webkit-text-stroke:0.05px #7f7f7f">EUR</div>
<div class="t" style="left:566.5px;width:400px;text-align:right;top:394.87px;font-size:9.6px;color:#7f7f7f;-webkit-text-stroke:0.05px #7f7f7f">0,00</div>
<div class="t" style="left:251.4px;top:444.87px;font-size:9.6px;color:#7f7f7f;-webkit-text-stroke:0.05px #7f7f7f">Ursprungsforderung</div>
<div class="t" style="left:376px;width:400px;text-align:right;top:444.87px;font-size:9.6px;color:#7f7f7f;-webkit-text-stroke:0.05px #7f7f7f">EUR</div>
<div class="t" style="left:566.5px;width:400px;text-align:right;top:444.87px;font-size:9.6px;color:#7f7f7f;-webkit-text-stroke:0.05px #7f7f7f">-200.000,00</div>
<div class="t" style="left:251.4px;top:471.87px;font-size:9.6px;color:#7f7f7f;-webkit-text-stroke:0.05px #7f7f7f">Zahlungen insgesamt</div>
<div class="t" style="left:376px;width:400px;text-align:right;top:471.87px;font-size:9.6px;color:#7f7f7f;-webkit-text-stroke:0.05px #7f7f7f">EUR</div>
<div class="t" style="left:566.5px;width:400px;text-align:right;top:471.87px;font-size:9.6px;color:#7f7f7f;-webkit-text-stroke:0.05px #7f7f7f">57.355,00</div>
<div class="t" style="left:251.4px;top:485.87px;font-size:9.6px;color:#7f7f7f;-webkit-text-stroke:0.05px #7f7f7f">Selbst geleistete Zahlungen</div>
<div class="t" style="left:376px;width:400px;text-align:right;top:485.87px;font-size:9.6px;color:#7f7f7f;-webkit-text-stroke:0.05px #7f7f7f">EUR</div>
<div class="t" style="left:566.5px;width:400px;text-align:right;top:485.87px;font-size:9.6px;color:#7f7f7f;-webkit-text-stroke:0.05px #7f7f7f">1.800,00</div>
<div class="t" style="left:251.4px;top:513.87px;font-size:9.6px;color:#7f7f7f;-webkit-text-stroke:0.05px #7f7f7f">Letzte geleistete Zahlung</div>
<div class="t" style="left:376px;width:400px;text-align:right;top:513.87px;font-size:9.6px;color:#7f7f7f;-webkit-text-stroke:0.05px #7f7f7f">am</div>
<div class="t" style="left:566.5px;width:400px;text-align:right;top:513.87px;font-size:9.6px;color:#7f7f7f;-webkit-text-stroke:0.05px #7f7f7f">01.11.2024</div>
<div class="a" style="left:248px;top:409px;width:720px;height:1px;background:#cfcfcf"></div>
<div class="t" style="left:251.2px;top:414.93px;font-size:11.9px;color:#3b8ad8;">Gesamtforderung</div>
<div class="t" style="left:376px;width:400px;text-align:right;top:414.93px;font-size:11.9px;color:#3b8ad8;">EUR</div>
<div class="t" style="left:566.8px;width:400px;text-align:right;top:414.93px;font-size:11.9px;color:#3b8ad8;">-175.335,17</div>
<div class="a" style="left:247px;top:580px;width:224px;height:16px;background:#fafafa;border:1px solid #d9d9d9;border-bottom-color:#cacaca;border-radius:1px"></div>
<div class="t" style="left:59.0px;width:600px;text-align:center;top:583.37px;font-size:9.6px;color:#222;transform:scaleX(0.855);transform-origin:center;">Berechnen</div>
<div class="a" style="left:505px;top:580px;width:224px;height:16px;background:#fafafa;border:1px solid #d9d9d9;border-bottom-color:#cacaca;border-radius:1px"></div>
<div class="t" style="left:317.0px;width:600px;text-align:center;top:583.37px;font-size:9.6px;color:#222;transform:scaleX(0.855);transform-origin:center;"><u>A</u>uswerten</div>
<div class="a" style="left:767px;top:580px;width:224px;height:16px;background:#fafafa;border:1px solid #d9d9d9;border-bottom-color:#cacaca;border-radius:1px"></div>
<div class="t" style="left:579.0px;width:600px;text-align:center;top:583.37px;font-size:9.6px;color:#222;transform:scaleX(0.855);transform-origin:center;">Schnellübersicht</div>
<div class="a" style="left:2px;top:603px;width:998px;height:14px;background:#f0f0f0;border-top:1px solid #d8d8d8"></div>
<div class="a" style="left:668px;top:604px;width:1px;height:13px;background:#cfcfcf"></div>
<div class="t" style="left:3px;top:605.87px;font-size:9.6px;color:#222;transform:scaleX(0.855);transform-origin:left;">Aktueller Benutzer: Administrator</div>
<svg class="a" style="left:815px;top:605px" width="12" height="12" viewBox="0 0 12 12"><path d="M0.5 0.5h6l2.5 2.5v8.5h-8.5z" fill="#2b7fdc"/><path d="M3 9.5l6.5-7" stroke="#e8f2fc" stroke-width="1.2"/><path d="M9.5 2.5l1.5-1.5" stroke="#8ab8e8" stroke-width="1"/></svg>
<div class="t" style="left:830px;top:605.87px;font-size:9.6px;color:#222;transform:scaleX(0.843);transform-origin:left;">zuletzt geändert: 28.01.2025 - Administrator</div></body></html>
